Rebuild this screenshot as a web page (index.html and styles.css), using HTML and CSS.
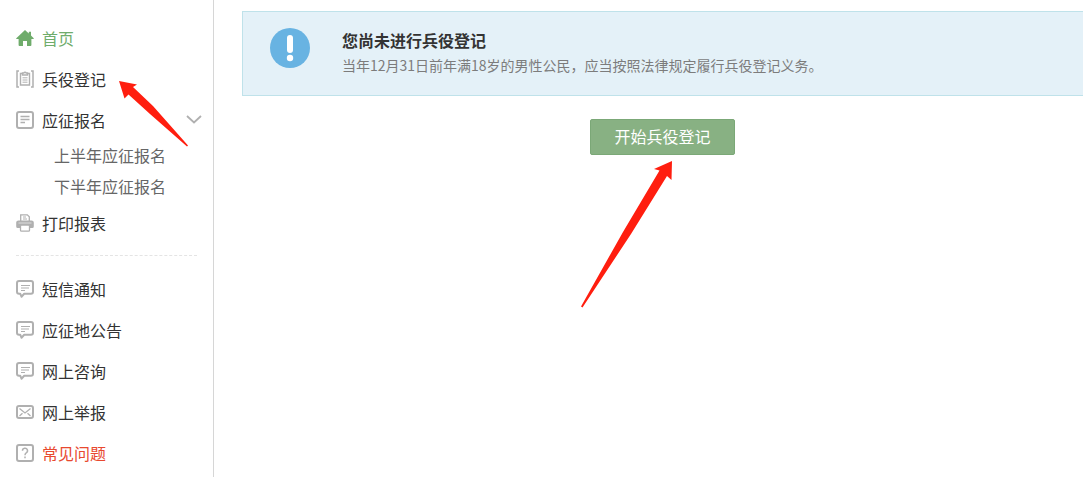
FILE: index.html
```html
<!DOCTYPE html>
<html lang="zh-CN">
<head>
  <meta charset="UTF-8">
  <meta name="viewport" content="width=device-width, initial-scale=1.0">
  <title>兵役登记</title>
  <link rel="stylesheet" href="styles.css">
</head>
<body>
  <!-- shared icons -->
  <svg class="sprite" aria-hidden="true">
    <symbol id="icon-chat" viewBox="0 0 18 18">
      <path d="M3 1h12a2 2 0 0 1 2 2v8.800a2 2 0 0 1-2 2H8.200l-2.700 2.900-1.200-2.900H3a2 2 0 0 1-2-2V3a2 2 0 0 1 2-2z" fill="none" stroke="currentColor" stroke-width="2" stroke-linejoin="round"/>
      <path d="M5 5.500h9M5 8h8M5 10.500h4" stroke="currentColor" stroke-width="1.100"/>
    </symbol>
  </svg>

  <div class="layout">
    <nav class="sidebar">
      <a class="item active" href="#">
        <svg class="icon" viewBox="0 0 18 18"><path d="M9 1 0.300 9.200c-.3.4 0 .9.500.9H2.600V16c0 .6.300.9.900.9H7v-5h4v5h3.500c.6 0 .9-.3.900-.9v-5.900h1.800c.5 0 .8-.5.500-.9L15 6.600V2.800h-2.200v1.800z" fill="currentColor"/></svg>
        首页
      </a>
      <a class="item" href="#">
        <svg class="icon" viewBox="0 0 18 18" fill="none" stroke="currentColor">
          <path d="M3 1H1v16h2M15 1h2v16h-2" stroke-width="1.500"/>
          <path d="M6.500 3.500h-2v11.500h9V3.500h-2" stroke-width="1.400"/>
          <path d="M6.500 5V3h1.300a1.300 1.300 0 0 1 2.400 0h1.300v2z" stroke-width="1.400"/>
          <path d="M6.500 7.800h5M6.500 10h5M6.500 12.200h5"/>
        </svg>
        兵役登记
      </a>
      <a class="item" href="#">
        <svg class="icon" viewBox="0 0 18 18" fill="none" stroke="currentColor">
          <rect x="1" y="1" width="16" height="16" rx="2" stroke-width="2"/>
          <path d="M4.500 5.500h9M4.500 8.500h9M4.500 11.500h4.500" stroke-width="1.500"/>
        </svg>
        应征报名
        <svg class="chevron" viewBox="0 0 16 9"><path d="M1 1l7 6.500L15 1" fill="none" stroke="currentColor" stroke-width="1.800"/></svg>
      </a>
      <a class="subitem" href="#">上半年应征报名</a>
      <a class="subitem" href="#">下半年应征报名</a>
      <a class="item" href="#">
        <svg class="icon" viewBox="0 0 18 18">
          <path d="M4.700 7V.8h6.600l2 2V7" fill="#fff" stroke="currentColor" stroke-width="1.300"/>
          <path d="M7 3h3M7 5h4" stroke="currentColor"/>
          <path d="M2.500 6.500h13A2.300 2.300 0 0 1 17.800 9v3.500a1.500 1.500 0 0 1-1.500 1.500H1.700A1.500 1.500 0 0 1 .2 12.500V9a2.300 2.300 0 0 1 2.300-2.500z" fill="currentColor"/>
          <path d="M2.500 9h13" stroke="#ddd"/>
          <rect x="4.500" y="11" width="9" height="6.200" rx="1" fill="#fff" stroke="currentColor" stroke-width="1.300"/>
        </svg>
        打印报表
      </a>
      <hr class="divider">
      <a class="item" href="#"><svg class="icon"><use href="#icon-chat"/></svg>短信通知</a>
      <a class="item" href="#"><svg class="icon"><use href="#icon-chat"/></svg>应征地公告</a>
      <a class="item" href="#"><svg class="icon"><use href="#icon-chat"/></svg>网上咨询</a>
      <a class="item" href="#">
        <svg class="icon" viewBox="0 0 18 18" fill="none" stroke="currentColor">
          <rect x="1" y="3" width="16" height="12" rx="2" stroke-width="2"/>
          <path d="M3.500 5.500 9 10l5.500-4.500M3.500 13l3-2.800M14.500 13l-3-2.800" stroke-width="1.300"/>
        </svg>
        网上举报
      </a>
      <a class="item warn" href="#">
        <svg class="icon" viewBox="0 0 18 18" fill="none" stroke="currentColor">
          <rect x="1" y="1" width="16" height="16" rx="2" stroke-width="2"/>
          <path d="M6.500 6.800a2.500 2.500 0 1 1 3.700 2.100C9.300 9.400 9 9.900 9 11.200M9 12.600v1.700" stroke-width="1.500"/>
        </svg>
        常见问题
      </a>
    </nav>

    <main class="content">
      <section class="notice">
        <svg class="notice-icon" viewBox="0 0 40 40">
          <circle cx="20" cy="20" r="20" fill="#68b3e2"/>
          <rect x="17" y="7" width="6" height="18" rx="3" fill="#fff"/>
          <circle cx="20" cy="30" r="3.200" fill="#fff"/>
        </svg>
        <div>
          <h1 class="notice-title">您尚未进行兵役登记</h1>
          <p class="notice-text">当年12月31日前年满18岁的男性公民，应当按照法律规定履行兵役登记义务。</p>
        </div>
      </section>
      <div class="action">
        <button class="start" type="button">开始兵役登记</button>
        <svg class="arrow arrow-start" viewBox="0 0 92 147"><path d="M91 0 73 8l5.500 1.500L42 71 0 145.500l1.500 1L50 73l36-58 4.500 4z" fill="#ff1e0f"/></svg>
      </div>
    </main>

    <svg class="arrow arrow-menu" viewBox="0 0 70 66"><path d="M0 0 18 3.500 14 6l20 19 35 39.500-1 1L31 33 9.500 13.500l-4 4z" fill="#ff1e0f"/></svg>
  </div>
</body>
</html>
```

FILE: styles.css
```css
* {
  box-sizing: border-box;
}

body {
  margin: 0;
  font-family: "Microsoft YaHei", "Noto Sans CJK SC", sans-serif;
  font-size: 16px;
  color: #333;
  background: #fff;
}

.sprite {
  position: absolute;
  width: 0;
  height: 0;
}

.layout {
  position: relative;
  display: flex;
  min-height: 100vh;
}

.sidebar {
  flex: none;
  width: 214px;
  padding: 17px 11px 0 16px;
  border-right: 1px solid #d6d6d6;
}

.item {
  display: flex;
  align-items: center;
  gap: 8px;
  height: 41px;
  color: #333;
  text-decoration: none;
}

.item.active {
  color: #6fac6b;
}

.item.warn {
  color: #e8492f;
}

.icon {
  flex: none;
  width: 18px;
  height: 18px;
  color: #b0b0b0;
}

.active .icon {
  color: #6fac6b;
}

.chevron {
  width: 16px;
  height: 9px;
  margin-left: auto;
  color: #b0b0b0;
}

.subitem {
  display: block;
  padding-left: 38px;
  line-height: 31px;
  color: #666;
  text-decoration: none;
}

.divider {
  margin: 12px 5px 12px 0;
  border: 0;
  border-top: 1px dashed #e4e4e4;
}

.content {
  flex: 1;
  padding: 11px 0 0 28px;
}

.notice {
  display: flex;
  gap: 32px;
  min-height: 85px;
  padding: 16px 27px;
  background: #e4f1f8;
  border: 1px solid #bfe2ea;
  border-right: 0;
}

.notice-icon {
  flex: none;
  width: 40px;
  height: 40px;
}

.notice-title {
  margin: 0;
  font-size: 16px;
  line-height: 25px;
}

.notice-text {
  margin: 0;
  font-size: 14px;
  line-height: 25px;
  color: #7c7c7c;
}

.action {
  position: relative;
  margin-top: 23px;
  text-align: center;
}

.start {
  height: 36px;
  padding: 0 23px 2px;
  font: inherit;
  color: #fff;
  background: #88b183;
  border: 1px solid #7ba877;
  border-radius: 2px;
  cursor: pointer;
}

/* pointers drawn over the page */
.arrow {
  position: absolute;
  pointer-events: none;
}

.arrow-start {
  top: 42px;
  left: 50%;
  width: 92px;
  height: 147px;
  margin-left: -82px;
}

.arrow-menu {
  top: 81px;
  left: 119px;
  width: 70px;
  height: 66px;
}
```
